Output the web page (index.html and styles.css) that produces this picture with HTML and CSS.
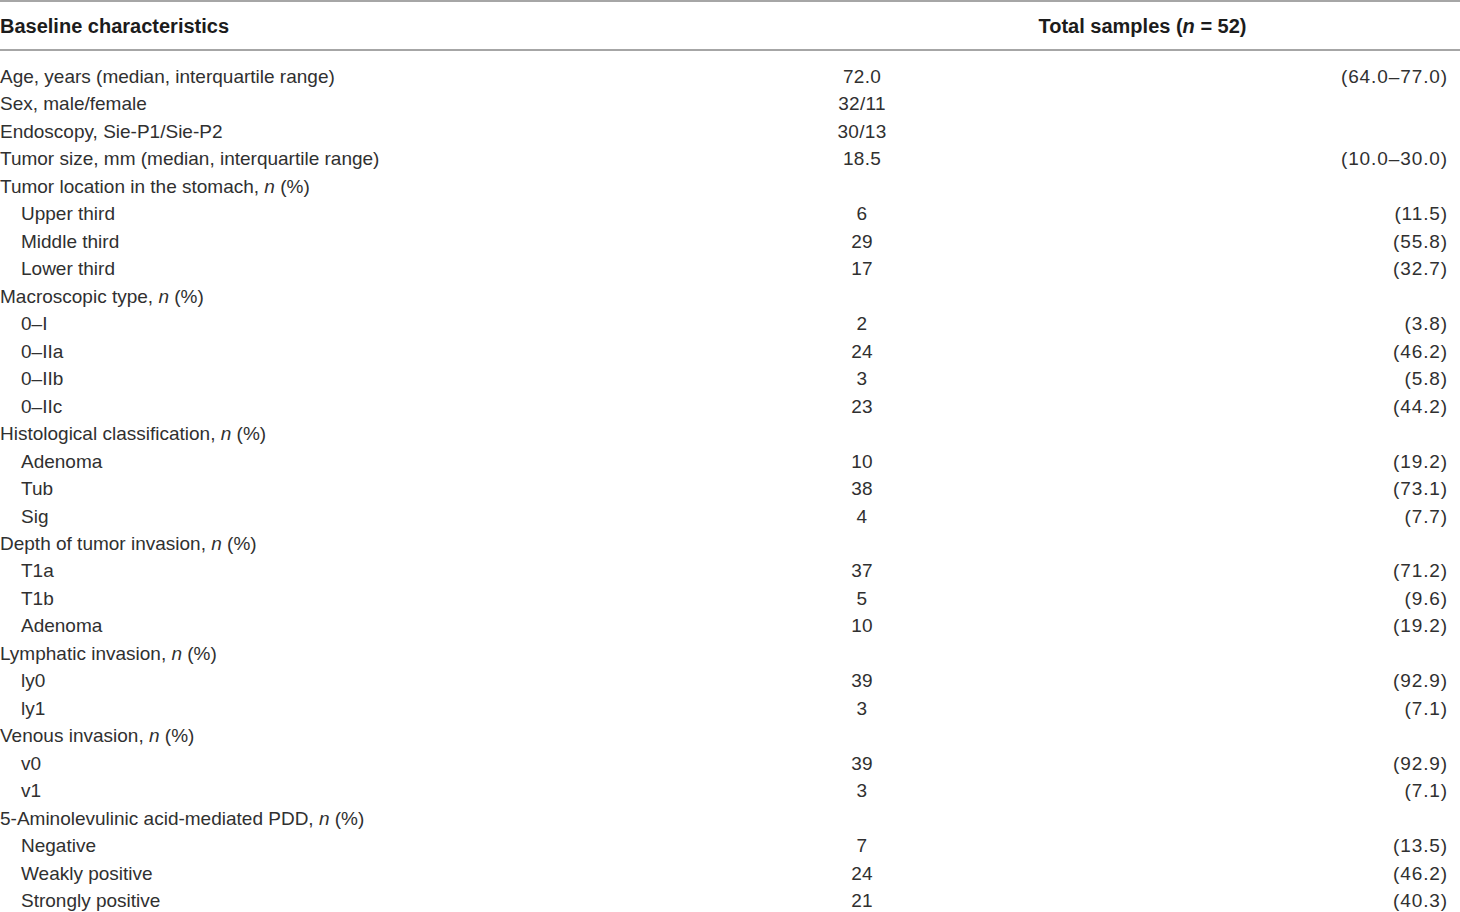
FILE: index.html
```html
<!DOCTYPE html>
<html lang="en">
<head>
<meta charset="utf-8">
<title>Baseline characteristics</title>
<link rel="stylesheet" href="styles.css">
</head>
<body>
<table class="tbl">
  <colgroup>
    <col class="c1">
    <col class="c2">
    <col class="c3">
  </colgroup>
  <thead>
    <tr>
      <th class="h-left">Baseline characteristics</th>
      <th class="h-center" colspan="2">Total samples (<i>n</i> = 52)</th>
    </tr>
  </thead>
  <tbody>
    <tr class="first"><td>Age, years (median, interquartile range)</td><td class="num">72.0</td><td class="pct">(64.0–77.0)</td></tr>
    <tr><td>Sex, male/female</td><td class="num">32/11</td><td class="pct"></td></tr>
    <tr><td>Endoscopy, Sie-P1/Sie-P2</td><td class="num">30/13</td><td class="pct"></td></tr>
    <tr><td>Tumor size, mm (median, interquartile range)</td><td class="num">18.5</td><td class="pct">(10.0–30.0)</td></tr>
    <tr><td>Tumor location in the stomach, <i>n</i> (%)</td><td class="num"></td><td class="pct"></td></tr>
    <tr><td class="sub">Upper third</td><td class="num">6</td><td class="pct">(11.5)</td></tr>
    <tr><td class="sub">Middle third</td><td class="num">29</td><td class="pct">(55.8)</td></tr>
    <tr><td class="sub">Lower third</td><td class="num">17</td><td class="pct">(32.7)</td></tr>
    <tr><td>Macroscopic type, <i>n</i> (%)</td><td class="num"></td><td class="pct"></td></tr>
    <tr><td class="sub">0–I</td><td class="num">2</td><td class="pct">(3.8)</td></tr>
    <tr><td class="sub">0–IIa</td><td class="num">24</td><td class="pct">(46.2)</td></tr>
    <tr><td class="sub">0–IIb</td><td class="num">3</td><td class="pct">(5.8)</td></tr>
    <tr><td class="sub">0–IIc</td><td class="num">23</td><td class="pct">(44.2)</td></tr>
    <tr><td>Histological classification, <i>n</i> (%)</td><td class="num"></td><td class="pct"></td></tr>
    <tr><td class="sub">Adenoma</td><td class="num">10</td><td class="pct">(19.2)</td></tr>
    <tr><td class="sub">Tub</td><td class="num">38</td><td class="pct">(73.1)</td></tr>
    <tr><td class="sub">Sig</td><td class="num">4</td><td class="pct">(7.7)</td></tr>
    <tr><td>Depth of tumor invasion, <i>n</i> (%)</td><td class="num"></td><td class="pct"></td></tr>
    <tr><td class="sub">T1a</td><td class="num">37</td><td class="pct">(71.2)</td></tr>
    <tr><td class="sub">T1b</td><td class="num">5</td><td class="pct">(9.6)</td></tr>
    <tr><td class="sub">Adenoma</td><td class="num">10</td><td class="pct">(19.2)</td></tr>
    <tr><td>Lymphatic invasion, <i>n</i> (%)</td><td class="num"></td><td class="pct"></td></tr>
    <tr><td class="sub">ly0</td><td class="num">39</td><td class="pct">(92.9)</td></tr>
    <tr><td class="sub">ly1</td><td class="num">3</td><td class="pct">(7.1)</td></tr>
    <tr><td>Venous invasion, <i>n</i> (%)</td><td class="num"></td><td class="pct"></td></tr>
    <tr><td class="sub">v0</td><td class="num">39</td><td class="pct">(92.9)</td></tr>
    <tr><td class="sub">v1</td><td class="num">3</td><td class="pct">(7.1)</td></tr>
    <tr><td>5-Aminolevulinic acid-mediated PDD, <i>n</i> (%)</td><td class="num"></td><td class="pct"></td></tr>
    <tr><td class="sub">Negative</td><td class="num">7</td><td class="pct">(13.5)</td></tr>
    <tr><td class="sub">Weakly positive</td><td class="num">24</td><td class="pct">(46.2)</td></tr>
    <tr><td class="sub">Strongly positive</td><td class="num">21</td><td class="pct">(40.3)</td></tr>
  </tbody>
</table>
</body>
</html>
```

FILE: styles.css
```css
html, body {
  margin: 0;
  padding: 0;
  background: #ffffff;
}

body {
  font-family: "Liberation Sans", Arial, sans-serif;
  font-size: 19px;
  color: #303030;
}

.tbl {
  width: 1460px;
  border-collapse: collapse;
  table-layout: fixed;
  border-top: 2px solid #a6a6a6;
}

.c1 { width: 825px; }
.c2 { width: 74px; }
.c3 { width: 561px; }

.tbl thead tr {
  height: 49px;
  border-bottom: 2px solid #a6a6a6;
}

.tbl th {
  font-size: 20px;
  font-weight: bold;
  color: #1c1c1c;
  padding: 1px 0 0 0;
  vertical-align: middle;
}

.h-left { text-align: left; }
.h-center { text-align: center; }

.tbl td {
  padding: 0;
  height: 27.47px;
  line-height: 27.47px;
  white-space: nowrap;
}

.tbl tbody tr.first td {
  padding-top: 12px;
}

.sub { padding-left: 21px !important; }

.num {
  text-align: center;
  letter-spacing: 0.3px;
}

.pct {
  text-align: right;
  padding-right: 12px !important;
  letter-spacing: 0.9px;
}
```
